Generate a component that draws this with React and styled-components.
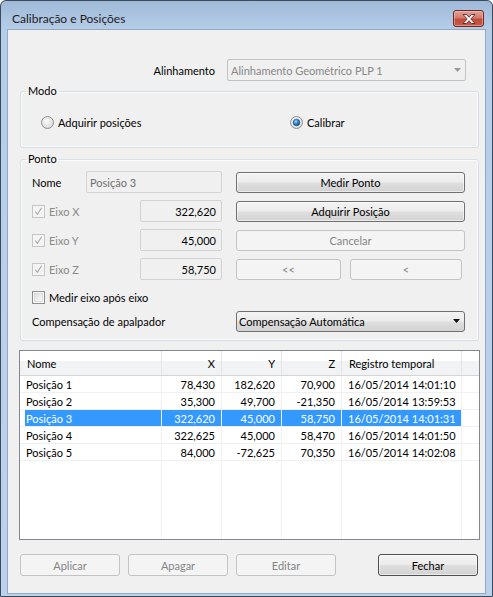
import React from 'react'
import styled, { createGlobalStyle } from 'styled-components'

const GlobalStyle = createGlobalStyle`
  html, body { margin: 0; padding: 0; background: #fff; }
  body { font-family: Lato, "Noto Sans", sans-serif; font-size: 11px; color: #000; }
  * { box-sizing: border-box; }
`

const buttonFace = 'linear-gradient(#f3f3f3 0%, #ececec 48%, #dfdfdf 52%, #d2d2d2 100%)'

const Window = styled.div`
  width: 493px;
  height: 597px;
  border: 1px solid #3b4b5e;
  border-radius: 6px 6px 0 0;
  background: linear-gradient(#9fb9d8 0px, #b6cde8 28px, #bcd2ec 100%);
  display: flex;
  flex-direction: column;
  overflow: hidden;
`

const TitleBar = styled.div`
  flex: none;
  height: 28px;
  display: flex;
  align-items: flex-start;
  justify-content: space-between;
  padding: 9px 8px 0 11px;
`

const Title = styled.div`
  font-size: 12px;
  line-height: 17px;
  color: #1b1b1b;
`

const CloseButton = styled.div`
  width: 31px;
  height: 17px;
  border: 1px solid #6e2a25;
  border-radius: 3px;
  background: linear-gradient(#e2a196 0%, #d57b6f 45%, #c24a3d 55%, #c85a48 100%);
  box-shadow: inset 0 0 0 1px rgba(255, 210, 200, 0.45);
  display: flex;
  align-items: center;
  justify-content: center;
`

const Client = styled.div`
  flex: 1;
  margin: 0 6px 2px 6px;
  border: 1px solid #93a9c3;
  background: #f0f0f0;
  display: flex;
  flex-direction: column;
  padding: 0 6px 0 12px;
`

const AlignRow = styled.div`
  margin-top: 29px;
  height: 22px;
  display: flex;
  align-items: center;
  justify-content: flex-end;
  gap: 12px;
  padding-right: 13px;
`

const Combo = styled.div`
  width: ${p => p.$w}px;
  height: ${p => p.$h || 22}px;
  border: 1px solid ${p => (p.$disabled ? '#c2c2c2' : '#707070')};
  border-radius: ${p => (p.$disabled ? 2 : 3)}px;
  background: ${p => (p.$disabled ? '#f0f0f0' : buttonFace)};
  color: ${p => (p.$disabled ? '#878787' : '#000')};
  display: flex;
  align-items: center;
  justify-content: space-between;
  padding: 0 4px 0 ${p => (p.$disabled ? 3 : 2)}px;
`

const Group = styled.fieldset`
  margin: ${p => p.$top}px 0 0;
  padding: 0;
  border: 1px solid #d5dfe5;
  border-radius: 3px;
  box-shadow: inset 0 0 0 1px #fafafa;
  min-width: 0;
`

const Legend = styled.legend`
  margin-left: 5px;
  padding: 0 2px;
  line-height: 14px;
  height: 14px;
`

const ModeBody = styled.div`
  height: 49px;
  display: grid;
  grid-template-columns: 249px 1fr;
  align-items: center;
  padding-left: 20px;
`

const Choice = styled.label`
  display: flex;
  align-items: center;
  gap: 4px;
  color: ${p => (p.$muted ? '#8a8a8a' : '#000')};
`

const PointBody = styled.div`
  padding: 5px 12px 8px 11px;
  display: flex;
  flex-direction: column;
`

const FormRow = styled.div`
  display: grid;
  grid-template-columns: 190px 229px;
  column-gap: 14px;
  height: ${p => p.$h}px;
  margin-top: ${p => p.$top || 0}px;
  align-items: center;
`

const FieldLine = styled.div`
  display: flex;
  align-items: center;
  justify-content: space-between;
  height: 100%;
`

const TextBox = styled.div`
  width: ${p => p.$w}px;
  height: 22px;
  border: 1px solid #d3d3d3;
  border-radius: 2px;
  background: #f0f0f0;
  display: flex;
  align-items: center;
  justify-content: ${p => (p.$right ? 'flex-end' : 'flex-start')};
  padding: 0 5px 0 3px;
  color: ${p => (p.$muted ? '#6f6f6f' : '#000')};
`

const Button = styled.button`
  width: ${p => (p.$w ? `${p.$w}px` : '100%')};
  height: ${p => p.$h || 22}px;
  margin: 0;
  padding: 0;
  font: inherit;
  border: 1px solid ${p => (p.disabled ? '#c3c3c3' : p.$default ? '#4f4f4f' : '#707070')};
  border-radius: 3px;
  background: ${p => (p.disabled ? '#f4f4f4' : buttonFace)};
  box-shadow: ${p => (p.disabled ? 'none' : 'inset 0 0 0 1px rgba(255,255,255,0.55)')};
  color: ${p => (p.disabled ? '#858585' : '#000')};
  display: flex;
  align-items: center;
  justify-content: center;
`

const NavButtons = styled.div`
  display: flex;
  gap: 9px;
  align-items: center;
`

const cols = '142px 60px 60px 60px 120px 1fr'

const Table = styled.div`
  margin: 9px -1px 0;
  height: 190px;
  flex: none;
  border: 1px solid #828790;
  background: #fff;
  display: flex;
  flex-direction: column;
  overflow: hidden;
`

const HeaderRow = styled.div`
  flex: none;
  display: grid;
  grid-template-columns: ${cols};
  height: 25px;
  border-bottom: 1px solid #d5d5d5;
  background: linear-gradient(#ffffff 0%, #ffffff 42%, #f2f3f5 42%, #f2f3f5 100%);
`

const HeadCell = styled.div`
  border-right: 1px solid ${p => (p.$last ? 'transparent' : '#e2e5e9')};
  display: flex;
  align-items: center;
  justify-content: ${p => (p.$right ? 'flex-end' : 'flex-start')};
  padding: 0 6px 0 7px;
  white-space: nowrap;
`

const Row = styled.div`
  flex: none;
  display: grid;
  grid-template-columns: ${cols};
  height: 17px;
  border-bottom: 1px solid #f0f0f0;
`

const Cell = styled.div`
  border-right: 1px solid ${p => (p.$last ? 'transparent' : '#f0f0f0')};
  display: flex;
  align-items: center;
  justify-content: ${p => (p.$right ? 'flex-end' : 'flex-start')};
  padding: 0 6px;
  white-space: nowrap;
  overflow: hidden;
  color: ${p => (p.$selected && !p.$last ? '#fff' : '#000')};
  background: ${p =>
    !p.$selected || p.$last
      ? 'transparent'
      : p.$first
      ? 'linear-gradient(to right, transparent 5px, #3399ff 5px)'
      : '#3399ff'};
`

const Filler = styled.div`
  flex: 1;
  display: grid;
  grid-template-columns: ${cols};
`

const FillerCell = styled.div`
  border-right: 1px solid ${p => (p.$last ? 'transparent' : '#f0f0f0')};
`

const Footer = styled.div`
  margin: 14px 1px 0 0;
  display: flex;
  gap: 8px;
  & > :last-child { margin-left: auto; }
`

const Arrow = ({ color }) => (
  <svg width="7" height="4" viewBox="0 0 7 4">
    <path d="M0 0 H7 L3.5 4 Z" fill={color} />
  </svg>
)

const CloseGlyph = () => (
  <svg width="14" height="10" viewBox="0 0 14 10">
    <path
      d="M1 0.5 H4.5 L7 3.3 L9.5 0.5 H13 L8.8 5 L13 9.5 H9.5 L7 6.7 L4.5 9.5 H1 L5.2 5 Z"
      fill="#fff"
      stroke="#5b2620"
      strokeWidth="0.9"
      strokeLinejoin="round"
    />
  </svg>
)

const Radio = ({ checked }) => (
  <svg width="13" height="13" viewBox="0 0 13 13">
    <defs>
      <radialGradient id="rbg" cx="0.4" cy="0.35" r="0.7">
        <stop offset="0" stopColor="#fbfbfb" />
        <stop offset="1" stopColor="#d6d6d6" />
      </radialGradient>
      <radialGradient id="rdot" cx="0.4" cy="0.35" r="0.7">
        <stop offset="0" stopColor="#9fdcff" />
        <stop offset="0.5" stopColor="#2a83d4" />
        <stop offset="1" stopColor="#0d3f7a" />
      </radialGradient>
    </defs>
    <circle cx="6.5" cy="6.5" r="6" fill="url(#rbg)" stroke="#8e8f8f" strokeWidth="1" />
    <circle cx="6.5" cy="6.5" r="4.2" fill="none" stroke="#e6e6e6" strokeWidth="0.8" />
    {checked && <circle cx="6.5" cy="6.5" r="3.3" fill="url(#rdot)" stroke="#1c4f86" strokeWidth="0.6" />}
  </svg>
)

const CheckBox = ({ checked, disabled }) => (
  <svg width="13" height="13" viewBox="0 0 13 13">
    <defs>
      <linearGradient id="cbg" x1="0" y1="0" x2="1" y2="1">
        <stop offset="0" stopColor="#dcdcdc" />
        <stop offset="1" stopColor="#fbfbfb" />
      </linearGradient>
    </defs>
    <rect x="0.5" y="0.5" width="12" height="12" fill={disabled ? '#f4f4f4' : '#f6f6f6'} stroke={disabled ? '#c6c6c6' : '#8e8f8f'} />
    {!disabled && <rect x="2.5" y="2.5" width="8" height="8" fill="url(#cbg)" stroke="#d0d0d0" strokeWidth="0.6" />}
    {checked && (
      <path d="M3.3 6.6 L5.4 9.3 L9.6 2.8" fill="none" stroke={disabled ? '#a8a8a8' : '#333'} strokeWidth="1.1" />
    )}
  </svg>
)

const rows = [
  ['Posição 1', '78,430', '182,620', '70,900', '16/05/2014 14:01:10'],
  ['Posição 2', '35,300', '49,700', '-21,350', '16/05/2014 13:59:53'],
  ['Posição 3', '322,620', '45,000', '58,750', '16/05/2014 14:01:31'],
  ['Posição 4', '322,625', '45,000', '58,470', '16/05/2014 14:01:50'],
  ['Posição 5', '84,000', '-72,625', '70,350', '16/05/2014 14:02:08'],
]

const axes = [
  ['Eixo X', '322,620'],
  ['Eixo Y', '45,000'],
  ['Eixo Z', '58,750'],
]

const rightButtons = [
  <Button key="m" $h={21}>Medir Ponto</Button>,
  <Button key="a" $h={21}>Adquirir Posição</Button>,
  <Button key="c" $h={21} disabled>Cancelar</Button>,
  <NavButtons key="n">
    <Button $w={105} $h={21} disabled>&lt;&lt;</Button>
    <Button $w={112} $h={21} disabled>&lt;</Button>
  </NavButtons>,
]

export default function App() {
  return (
    <>
      <GlobalStyle />
      <Window>
        <TitleBar>
          <Title>Calibração e Posições</Title>
          <CloseButton>
            <CloseGlyph />
          </CloseButton>
        </TitleBar>
        <Client>
          <AlignRow>
            <span>Alinhamento</span>
            <Combo $w={239} $disabled>
              <span>Alinhamento Geométrico PLP 1</span>
              <Arrow color="#9a9a9a" />
            </Combo>
          </AlignRow>

          <Group $top={3}>
            <Legend>Modo</Legend>
            <ModeBody>
              <Choice>
                <Radio />
                Adquirir posições
              </Choice>
              <Choice>
                <Radio checked />
                Calibrar
              </Choice>
            </ModeBody>
          </Group>

          <Group $top={4}>
            <Legend>Ponto</Legend>
            <PointBody>
              <FormRow $h={22}>
                <FieldLine>
                  <span>Nome</span>
                  <TextBox $w={136} $muted>Posição 3</TextBox>
                </FieldLine>
                {rightButtons[0]}
              </FormRow>
              {axes.map(([label, value], i) => (
                <FormRow $h={22} $top={7} key={label}>
                  <FieldLine>
                    <Choice $muted>
                      <CheckBox checked disabled />
                      {label}
                    </Choice>
                    <TextBox $w={82} $right>{value}</TextBox>
                  </FieldLine>
                  {rightButtons[i + 1]}
                </FormRow>
              ))}
              <FormRow $h={13} $top={11}>
                <Choice>
                  <CheckBox />
                  Medir eixo após eixo
                </Choice>
              </FormRow>
              <FormRow $h={22} $top={6}>
                <span>Compensação de apalpador</span>
                <Combo $w={229} $h={21}>
                  <span>Compensação Automática</span>
                  <Arrow color="#111" />
                </Combo>
              </FormRow>
            </PointBody>
          </Group>

          <Table>
            <HeaderRow>
              <HeadCell>Nome</HeadCell>
              <HeadCell $right>X</HeadCell>
              <HeadCell $right>Y</HeadCell>
              <HeadCell $right>Z</HeadCell>
              <HeadCell>Registro temporal</HeadCell>
              <HeadCell $last />
            </HeaderRow>
            {rows.map((r, i) => {
              const sel = i === 2
              return (
                <Row key={r[0]}>
                  <Cell $selected={sel} $first>{r[0]}</Cell>
                  <Cell $selected={sel} $right>{r[1]}</Cell>
                  <Cell $selected={sel} $right>{r[2]}</Cell>
                  <Cell $selected={sel} $right>{r[3]}</Cell>
                  <Cell $selected={sel}>{r[4]}</Cell>
                  <Cell $last />
                </Row>
              )
            })}
            <Filler>
              <FillerCell />
              <FillerCell />
              <FillerCell />
              <FillerCell />
              <FillerCell />
              <FillerCell $last />
            </Filler>
          </Table>

          <Footer>
            <Button $w={100} disabled>Aplicar</Button>
            <Button $w={100} disabled>Apagar</Button>
            <Button $w={100} disabled>Editar</Button>
            <Button $w={100} $default>Fechar</Button>
          </Footer>
        </Client>
      </Window>
    </>
  )
}
